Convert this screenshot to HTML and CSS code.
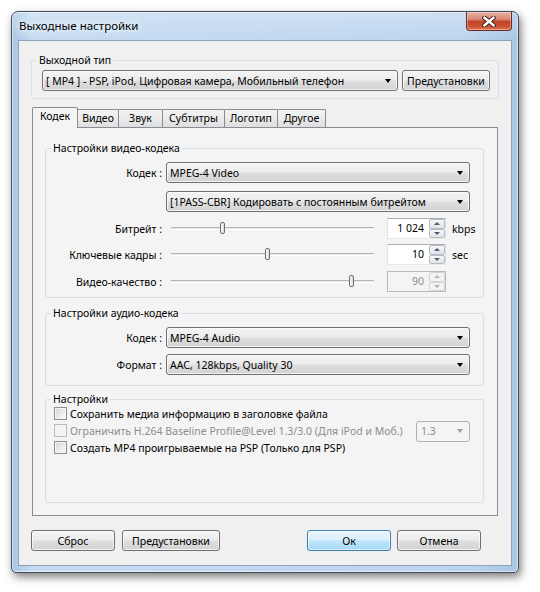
FILE: index.html
```html
<!DOCTYPE html>
<html lang="ru">
<head>
<meta charset="utf-8">
<title>Выходные настройки</title>
<link rel="stylesheet" href="styles.css">
</head>
<body>
<div class="window">
  <div class="titlebar">
    <span class="title">Выходные настройки</span>
    <div class="close">
      <svg width="14" height="11" viewBox="0 0 14 11">
        <path d="M2.5 1.8 L11.5 9.2 M11.5 1.8 L2.5 9.2" stroke="#4b1a12" stroke-width="4.4" stroke-linecap="square" fill="none"/>
        <path d="M2.5 1.8 L11.5 9.2 M11.5 1.8 L2.5 9.2" stroke="#ffffff" stroke-width="2.4" stroke-linecap="square" fill="none"/>
      </svg>
    </div>
  </div>
  <div class="client">
    <fieldset class="group g-type">
      <legend>Выходной тип</legend>
      <div class="type-row">
        <div class="combo type-combo"><span class="combo-text">[ MP4 ] - PSP, iPod, Цифровая камера, Мобильный телефон</span><i class="arrow"></i></div>
        <div class="btn type-btn">Предустановки</div>
      </div>
    </fieldset>

    <div class="tabs">
      <div class="tab active t-codec">Кодек</div>
      <div class="tab t-video">Видео</div>
      <div class="tab t-sound">Звук</div>
      <div class="tab t-subs">Субтитры</div>
      <div class="tab t-logo">Логотип</div>
      <div class="tab t-other">Другое</div>
    </div>

    <div class="panel">
      <fieldset class="group g-video">
        <legend>Настройки видео-кодека</legend>
        <div class="frow">
          <span class="flabel">Кодек :</span>
          <div class="combo fcombo"><span class="combo-text">MPEG-4 Video</span><i class="arrow"></i></div>
        </div>
        <div class="frow r-mode">
          <span class="flabel"></span>
          <div class="combo fcombo"><span class="combo-text">[1PASS-CBR] Кодировать с постоянным битрейтом</span><i class="arrow"></i></div>
        </div>
        <div class="frow srow s1">
          <span class="flabel">Битрейт :</span>
          <div class="slider"><div class="track"></div><div class="thumb" style="left:26%"></div></div>
          <div class="spin"><span class="spin-val">1 024</span><div class="spin-btns"><span class="sb up"></span><span class="sb down"></span></div></div>
          <span class="unit">kbps</span>
        </div>
        <div class="frow srow s2">
          <span class="flabel">Ключевые кадры :</span>
          <div class="slider"><div class="track"></div><div class="thumb" style="left:47.2%"></div></div>
          <div class="spin"><span class="spin-val">10</span><div class="spin-btns"><span class="sb up"></span><span class="sb down"></span></div></div>
          <span class="unit">sec</span>
        </div>
        <div class="frow srow s3">
          <span class="flabel">Видео-качество :</span>
          <div class="slider"><div class="track"></div><div class="thumb" style="left:86.4%"></div></div>
          <div class="spin disabled"><span class="spin-val">90</span><div class="spin-btns"><span class="sb up"></span><span class="sb down"></span></div></div>
        </div>
      </fieldset>

      <fieldset class="group g-audio">
        <legend>Настройки аудио-кодека</legend>
        <div class="frow">
          <span class="flabel">Кодек :</span>
          <div class="combo fcombo"><span class="combo-text">MPEG-4 Audio</span><i class="arrow"></i></div>
        </div>
        <div class="frow r-format">
          <span class="flabel">Формат :</span>
          <div class="combo fcombo"><span class="combo-text">AAC, 128kbps, Quality 30</span><i class="arrow"></i></div>
        </div>
      </fieldset>

      <fieldset class="group g-settings">
        <legend>Настройки</legend>
        <div class="chk-list">
          <div class="chk-row"><span class="chk"></span><span class="chk-text">Сохранить медиа информацию в заголовке файла</span></div>
          <div class="chk-row disabled"><span class="chk"></span><span class="chk-text">Ограничить H.264 Baseline Profile@Level 1.3/3.0 (Для iPod и Моб.)</span>
            <div class="combo small-combo disabled"><span class="combo-text">1.3</span><i class="arrow"></i></div>
          </div>
          <div class="chk-row"><span class="chk"></span><span class="chk-text">Создать MP4 проигрываемые на PSP (Только для PSP)</span></div>
        </div>
      </fieldset>
    </div>

    <div class="btnrow">
      <div class="btn b-reset">Сброс</div>
      <div class="btn b-presets">Предустановки</div>
      <div class="spacer"></div>
      <div class="btn default b-ok">Ок</div>
      <div class="btn b-cancel">Отмена</div>
    </div>
  </div>
</div>
</body>
</html>
```

FILE: styles.css
```css
* { box-sizing: border-box; }

html, body {
  margin: 0;
  padding: 0;
  background: #ffffff;
}

body {
  font-family: "Noto Sans", "Liberation Sans", sans-serif;
  font-size: 10.5px;
  color: #000;
  width: 540px;
  height: 592px;
  overflow: hidden;
}

/* ---------- window frame ---------- */
.window {
  margin: 11px 0 0 11px;
  width: 508px;
  height: 562px;
  border: 1px solid #414b57;
  border-radius: 7px 7px 5px 5px;
  background:
    linear-gradient(to bottom, rgba(255,255,255,0.25) 0, rgba(255,255,255,0) 28px),
    linear-gradient(to right, #a8c5e5 0, #c4dbf2 4%, #c1d8f0 50%, #bcd5ee 90%, #a9c6e6 100%);
  box-shadow: 2px 4px 9px rgba(0,0,0,0.5), inset 0 0 0 1px rgba(255,255,255,0.55);
  padding: 0 6px 6px;
  display: flex;
  flex-direction: column;
}

.titlebar {
  height: 28px;
  display: flex;
  justify-content: space-between;
  align-items: flex-start;
  flex-shrink: 0;
}

.title {
  font-size: 11.5px;
  line-height: 28px;
  padding-left: 1px;
  color: #000;
  text-shadow: 0 0 6px #ffffff, 0 0 10px #ffffff;
}

.close {
  width: 46px;
  height: 19px;
  border: 1px solid #6f2b22;
  border-top: none;
  border-radius: 0 0 4px 4px;
  background: linear-gradient(to bottom, #eab1a3 0, #d98a77 40%, #c4452c 52%, #c9512f 80%, #dd7a55 100%);
  box-shadow: inset 0 0 0 1px rgba(255,255,255,0.35);
  display: flex;
  align-items: center;
  justify-content: center;
}

.close svg { display: block; }

/* ---------- client area ---------- */
.client {
  flex: 1;
  background: #f0f0f0;
  border: 1px solid #8ea2b8;
  padding: 12px 12px 14px;
  display: flex;
  flex-direction: column;
  min-height: 0;
}

.group {
  margin: 0;
  padding: 0;
  border: 1px solid #d5dfe5;
  border-radius: 3px;
  min-width: 0;
}

.group legend {
  padding: 0 2px;
  margin-left: 5px;
  line-height: 14px;
}

.g-type { padding: 3px 0 7px 0; }

.type-row {
  display: flex;
  gap: 4px;
  padding-left: 10px;
}

/* ---------- combo / button ---------- */
.combo {
  height: 21px;
  border: 1px solid #707070;
  border-radius: 3px;
  background: linear-gradient(to bottom, #f4f4f4 0, #ececec 48%, #dfdfdf 52%, #d2d2d2 100%);
  box-shadow: inset 0 0 0 1px rgba(255,255,255,0.7);
  display: flex;
  align-items: center;
  padding-left: 3px;
  white-space: nowrap;
  overflow: hidden;
}

.combo-text { flex: 1; overflow: hidden; }

.arrow {
  display: block;
  width: 0;
  height: 0;
  border-left: 3.5px solid transparent;
  border-right: 3.5px solid transparent;
  border-top: 4px solid #000;
  margin: 0 6px 0 4px;
  flex-shrink: 0;
}

.type-combo { width: 356px; }
.type-btn { width: 88px; }

.btn {
  height: 21px;
  border: 1px solid #707070;
  border-radius: 3px;
  background: linear-gradient(to bottom, #f4f4f4 0, #ececec 48%, #dfdfdf 52%, #d2d2d2 100%);
  box-shadow: inset 0 0 0 1px rgba(255,255,255,0.7);
  display: flex;
  align-items: center;
  justify-content: center;
  white-space: nowrap;
}

.btn.default {
  border-color: #3c7fb1;
  background: linear-gradient(to bottom, #eaf6fd 0, #d9f0fc 48%, #bee6fd 52%, #a7d9f5 100%);
  box-shadow: inset 0 0 0 1px rgba(255,255,255,0.6);
}

/* ---------- tabs ---------- */
.tabs {
  display: flex;
  align-items: flex-end;
  height: 20px;
  margin: 8px 1px 0;
  position: relative;
  z-index: 1;
  flex-shrink: 0;
}

.tab {
  height: 18px;
  border: 1px solid #898c95;
  border-bottom: none;
  margin-right: -1px;
  background: linear-gradient(to bottom, #f3f3f3 0, #ebebeb 50%, #dedede 100%);
  line-height: 17px;
  text-align: center;
  border-radius: 2px 2px 0 0;
}

.tab.active {
  height: 21px;
  margin-bottom: -1px;
  background: #f4f4f4;
  line-height: 17px;
}

.t-codec { width: 46px; }
.t-video { width: 42px; }
.t-sound { width: 45px; }
.t-subs { width: 63px; }
.t-logo { width: 54px; }
.t-other { width: 49px; }

.panel {
  flex: 1;
  margin: 0 1px;
  border: 1px solid #898c95;
  background: #f4f4f4;
  padding: 13px 13px 12px 12px;
  display: flex;
  flex-direction: column;
  min-height: 0;
}

/* ---------- form rows ---------- */
.frow {
  display: flex;
  align-items: center;
  height: 21px;
}

.flabel {
  width: 116px;
  margin-right: 4px;
  text-align: right;
  white-space: nowrap;
  flex-shrink: 0;
}

.fcombo { width: 304px; }

.g-video { padding: 7px 0 5px; }
.g-video .r-mode { margin-top: 8px; }
.g-video .s1 { margin-top: 6px; }
.g-video .s2 { margin-top: 5px; }
.g-video .s3 { margin-top: 6px; }

.slider {
  width: 214px;
  height: 21px;
  position: relative;
  flex-shrink: 0;
}

.track {
  position: absolute;
  left: 5px;
  right: 6px;
  top: 9px;
  height: 3px;
  border-top: 1px solid #b6b6b6;
  border-bottom: 1px solid #ffffff;
  background: #e6e6e6;
}

.thumb {
  position: absolute;
  top: 4px;
  width: 5px;
  height: 12px;
  margin-left: -2px;
  border: 1px solid #6f6f6f;
  border-radius: 2px;
  background: linear-gradient(to right, #fbfbfb, #dcdcdc);
}

.spin {
  width: 59px;
  height: 21px;
  margin-left: 7px;
  border: 1px solid #abadb3;
  border-left-color: #e2e3ea;
  border-right-color: #dbdfe6;
  border-bottom-color: #e3e9ef;
  background: #ffffff;
  display: flex;
  align-items: stretch;
  flex-shrink: 0;
}

.spin-val {
  flex: 1;
  text-align: right;
  padding-right: 5px;
  line-height: 19px;
}

.spin-btns {
  width: 16px;
  display: flex;
  flex-direction: column;
}

.sb {
  flex: 1;
  border: 1px solid #b7bcc4;
  border-radius: 2px;
  background: linear-gradient(to bottom, #f6f7f8, #e1e3e7);
  display: flex;
  align-items: center;
  justify-content: center;
}

.sb::after {
  content: "";
  width: 0;
  height: 0;
  border-left: 3px solid transparent;
  border-right: 3px solid transparent;
}

.sb.up::after { border-bottom: 3px solid #4a5d7d; }
.sb.down::after { border-top: 3px solid #4a5d7d; }

.spin.disabled {
  background: #f4f4f4;
  border-color: #b7bcc1;
  color: #8d8d8d;
}

.spin.disabled .sb {
  border-color: #d3d5d8;
  background: #f3f3f3;
}

.spin.disabled .sb.up::after { border-bottom-color: #b5b5b5; }
.spin.disabled .sb.down::after { border-top-color: #b5b5b5; }

.unit { margin-left: 6px; }

.g-audio { margin-top: 8px; padding: 7px 0 10px; }
.g-audio .r-format { margin-top: 6px; }

/* ---------- settings ---------- */
.g-settings {
  margin-top: 6px;
  flex: 1;
  padding: 0;
}

.chk-list { margin-top: -1px; }

.chk-row {
  display: flex;
  align-items: center;
  height: 17px;
  padding: 0 13px 0 8px;
  white-space: nowrap;
}

.chk {
  width: 13px;
  height: 13px;
  border: 1px solid #8e8f8f;
  background: linear-gradient(135deg, #d4d4d4 0, #f2f2f2 70%, #fafafa 100%);
  box-shadow: inset 0 0 0 1px #f4f4f4;
  flex-shrink: 0;
}

.chk-text { margin-left: 3px; }

.chk-row.disabled { color: #8d8d8d; }
.chk-row.disabled .chk {
  border-color: #bcbcbc;
  background: #f4f4f4;
  box-shadow: none;
}

.small-combo {
  width: 54px;
  margin-left: auto;
  margin-top: 1px;
}

.combo.disabled {
  border-color: #adb2b5;
  background: #f4f4f4;
  box-shadow: none;
  color: #8d8d8d;
  padding-left: 4px;
}

.combo.disabled .arrow { border-top-color: #a0a0a0; }

/* ---------- bottom buttons ---------- */
.btnrow {
  display: flex;
  margin-top: 14px;
  padding-right: 18px;
  flex-shrink: 0;
}

.b-reset { width: 84px; }
.b-presets { width: 98px; margin-left: 7px; }
.spacer { flex: 1; }
.b-ok { width: 84px; }
.b-cancel { width: 84px; margin-left: 6px; }
```
